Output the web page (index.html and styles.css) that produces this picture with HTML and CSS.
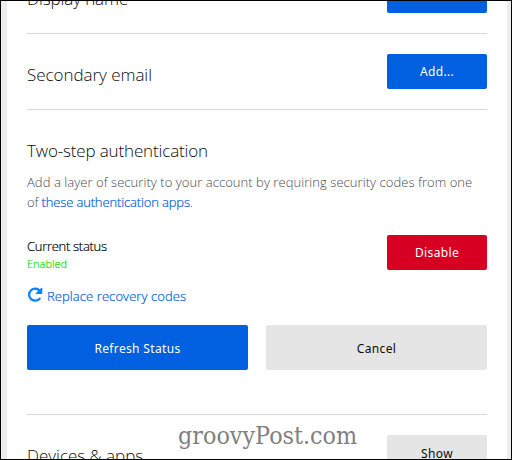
FILE: index.html
```
<!DOCTYPE html>
<html lang="en">
<head>
<meta charset="utf-8">
<title>Account settings</title>
<link rel="stylesheet" href="styles.css">
</head>
<body>
<main class="panel">
  <section class="row row-first">
    <h2 class="title t-display">Display name</h2>
    <button class="btn primary"></button>
  </section>
  <section class="row row-email">
    <h2 class="title t-email">Secondary email</h2>
    <button class="btn primary">Add...</button>
  </section>
  <section class="two-step">
    <h2 class="title t-two">Two-step authentication</h2>
    <p class="desc"><span class="d1">Add a layer of security to your account by requiring security codes from one</span><br><span class="d2">of <a href="#">these authentication apps</a>.</span></p>
    <div class="status">
      <div>
        <div class="label">Current status</div>
        <div class="enabled">Enabled</div>
      </div>
      <button class="btn danger">Disable</button>
    </div>
    <a class="replace" href="#">
      <svg class="icon" viewBox="0 0 16 16"><path d="M12.9 4.1A6 6 0 1 0 12.6 11.7" fill="none" stroke="#0a84ff" stroke-width="2.3" stroke-linecap="round"/><path d="M14.1 1.1Q15.3.2 15.3 1.5V6.3Q15.3 7 14.6 7H9.4Q8.1 7 9 6.1Z" fill="#0a84ff"/></svg>
      <span>Replace recovery codes</span>
    </a>
    <div class="actions">
      <button class="btn large primary">Refresh Status</button>
      <button class="btn large neutral">Cancel</button>
    </div>
  </section>
  <section class="row row-devices">
    <h2 class="title t-devices">Devices &amp; apps</h2>
    <button class="btn neutral show">Show</button>
  </section>
  <div class="watermark">groovyPost.com</div>
</main>
</body>
</html>
```
FILE: styles.css
```
* { box-sizing: border-box; }
body {
  margin: 0;
  width: 512px;
  height: 460px;
  border: 1px solid #000;
  background: #ededed;
  padding: 0 4px 0 6px;
  overflow: hidden;
  font-family: "Open Sans", "Noto Sans", sans-serif;
}
.panel {
  position: relative;
  height: 458px;
  padding: 0 20px;
  background: #fff;
  overflow: hidden;
}
.row {
  display: flex;
  justify-content: space-between;
  align-items: flex-start;
  border-bottom: 1px solid #d7d7db;
}
.row-first { height: 33px; }
.row-first .btn { margin-top: -23px; }
.row-email { height: 76px; padding-top: 20px; }
.row-devices { height: 76px; padding-top: 20px; border: 0; }
.title {
  margin: 0;
  font-size: 17px;
  line-height: 24px;
  font-weight: 300;
  color: #0c0c0d;
  white-space: nowrap;
}
.t-display { margin-top: -14px; letter-spacing: -.1px; }
.t-email { margin-top: 9px; letter-spacing: -.05px; }
.t-devices { margin-top: 9px; letter-spacing: -.02px; }
.t-two { letter-spacing: -.15px; }
.btn {
  width: 100px;
  height: 35px;
  padding: 0;
  border: 0;
  border-radius: 2px;
  font: 400 12px/36px "Noto Sans", sans-serif;
  letter-spacing: .35px;
}
.primary { background: #0060df; color: #fff; }
.danger { background: #d70022; color: #fff; }
.neutral { background: #e5e5e5; color: #0c0c0d; }
.show { line-height: 38px; }
.two-step {
  height: 305px;
  padding-top: 29px;
  border-bottom: 1px solid #d7d7db;
}
.desc {
  margin: 9px 0 0;
  font-size: 13px;
  line-height: 20px;
  font-weight: 300;
  color: #4a4a4f;
  white-space: nowrap;
}
.d1 { letter-spacing: .055px; }
.d2 { letter-spacing: -.14px; }
a {
  color: #0060df;
  text-decoration: none;
  -webkit-text-stroke: .2px currentColor;
}
.status {
  display: flex;
  justify-content: space-between;
  margin-top: 23px;
}
.label {
  margin-top: 2px;
  font-size: 13px;
  line-height: 19px;
  font-weight: 300;
  letter-spacing: -.29px;
  color: #000;
  -webkit-text-stroke: .2px currentColor;
}
.enabled {
  font-size: 11px;
  line-height: 16px;
  font-weight: 300;
  color: #12e000;
  -webkit-text-stroke: .2px currentColor;
}
.replace {
  display: flex;
  align-items: center;
  height: 20px;
  margin-top: 14px;
  font-size: 13px;
  font-weight: 300;
  letter-spacing: .08px;
}
.icon { width: 16px; height: 16px; margin: -2px 4px 0 0; }
.actions {
  display: flex;
  gap: 18px;
  margin-top: 19px;
}
.btn.large { width: 221px; height: 45px; line-height: 47px; }
.watermark {
  position: absolute;
  left: 171px;
  top: 420px;
  font: 24px/30px "DejaVu Serif", serif;
  color: #808080;
  transform: scaleX(.93);
  transform-origin: left;
}
```
